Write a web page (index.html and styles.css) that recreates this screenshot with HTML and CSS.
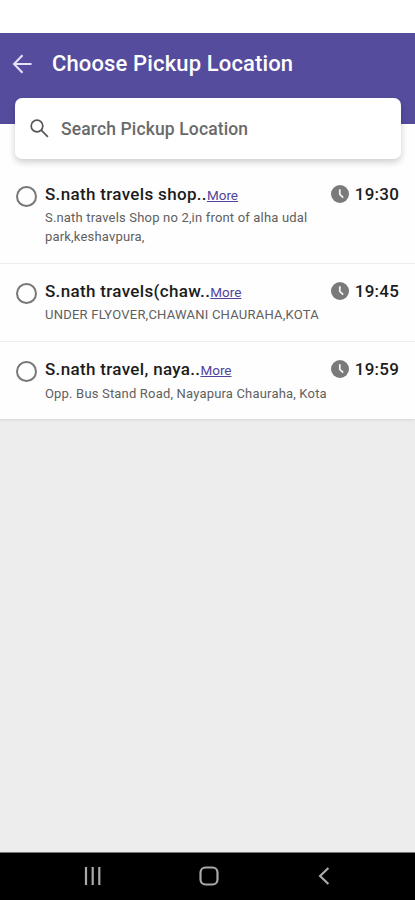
FILE: index.html
```html
<!DOCTYPE html>
<html lang="en">
<head>
<meta charset="utf-8">
<meta name="viewport" content="width=device-width, initial-scale=1">
<title>Choose Pickup Location</title>
<link rel="stylesheet" href="styles.css">
</head>
<body>
<div class="screen">
  <div class="status"></div>
  <header class="header">
    <svg class="back" viewBox="0 0 20 20"><path d="M19 10H1.5M10 1.2L1.5 10l8.5 8.8"/></svg>
    <h1 class="title">Choose Pickup Location</h1>
  </header>
  <main class="content">
    <div class="search">
      <svg class="search-icon" viewBox="0 0 19 19"><circle cx="7" cy="7" r="5.8"/><path d="M11.2 11.2L17.9 17.9"/></svg>
      <span class="placeholder">Search Pickup Location</span>
    </div>
    <ul class="list">
      <li class="row tall">
        <span class="radio"></span>
        <div class="info">
          <div class="line"><span class="name">S.nath travels shop..</span><a class="more">More</a></div>
          <p class="address">S.nath travels Shop no 2,in front of alha udal<br>park,keshavpura,</p>
        </div>
        <div class="time"><svg class="clock" viewBox="0 0 18 18"><circle cx="9" cy="9" r="9"/><path d="M8.8 4.3V9.4L12.2 12.6"/></svg><span>19:30</span></div>
      </li>
      <li class="row">
        <span class="radio"></span>
        <div class="info">
          <div class="line"><span class="name">S.nath travels(chaw..</span><a class="more">More</a></div>
          <p class="address caps">UNDER FLYOVER,CHAWANI CHAURAHA,KOTA</p>
        </div>
        <div class="time"><svg class="clock" viewBox="0 0 18 18"><circle cx="9" cy="9" r="9"/><path d="M8.8 4.3V9.4L12.2 12.6"/></svg><span>19:45</span></div>
      </li>
      <li class="row last">
        <span class="radio"></span>
        <div class="info">
          <div class="line"><span class="name">S.nath travel, naya..</span><a class="more">More</a></div>
          <p class="address">Opp. Bus Stand Road, Nayapura Chauraha, Kota</p>
        </div>
        <div class="time"><svg class="clock" viewBox="0 0 18 18"><circle cx="9" cy="9" r="9"/><path d="M8.8 4.3V9.4L12.2 12.6"/></svg><span>19:59</span></div>
      </li>
    </ul>
  </main>
  <nav class="navbar">
    <svg viewBox="0 0 20 20"><path d="M3 1v18M9.7 1v18M16.3 1v18"/></svg>
    <svg viewBox="0 0 20 20"><rect x="1.5" y="1.5" width="17" height="17" rx="5"/></svg>
    <svg viewBox="0 0 20 20"><path d="M14.4 2L6.1 10l8.3 8"/></svg>
  </nav>
</div>
</body>
</html>
```
FILE: styles.css
```css
* { box-sizing: border-box; }
body {
  margin: 0;
  background: #ededed;
  font-family: Roboto, "Liberation Sans", sans-serif;
}
.screen {
  display: flex;
  flex-direction: column;
  width: 415px;
  height: 900px;
  overflow: hidden;
}
.status { height: 33px; background: #fff; }
.header {
  display: flex;
  align-items: flex-start;
  height: 91px;
  padding: 17px 12px 0;
  background: #554c9e;
}
.back {
  width: 21px;
  height: 20px;
  margin-top: 4px;
  fill: none;
  stroke: #e6e2fa;
  stroke-width: 2;
}
.title {
  margin: 0 0 0 19px;
  color: #fff;
  font-size: 22px;
  line-height: 28px;
  font-weight: 500;
  letter-spacing: 0.14px;
  white-space: nowrap;
}
.content { flex: 1; }
.search {
  position: relative;
  display: flex;
  align-items: center;
  width: 386px;
  height: 61px;
  margin: -26px 0 0 15px;
  padding-left: 15px;
  border-radius: 7px;
  background: #fff;
  box-shadow: 0 3px 7px rgba(0, 0, 0, 0.2);
}
.search-icon {
  width: 19px;
  height: 19px;
  fill: none;
  stroke: #555;
  stroke-width: 1.7;
}
.placeholder {
  margin-left: 12px;
  color: #6a6a6a;
  font-size: 17.5px;
  font-weight: 500;
  letter-spacing: 0.13px;
}
.list {
  margin: -35px 0 0;
  padding: 35px 0 0;
  list-style: none;
  background: #fefefe;
  box-shadow: 0 1px 3px rgba(0, 0, 0, 0.1);
}
.row {
  display: flex;
  align-items: flex-start;
  height: 78px;
  padding: 15px 16px 0;
  border-bottom: 1px solid #eee;
}
.row.tall { height: 105px; padding-top: 23px; }
.row.last { height: 77px; border-bottom: 0; }
.radio {
  width: 21px;
  height: 21px;
  margin-top: 4px;
  border: 2px solid #777;
  border-radius: 50%;
}
.info { flex: 1; margin-left: 8px; white-space: nowrap; }
.line { height: 24px; line-height: 24px; }
.name { color: #1c1c1c; font-size: 17px; font-weight: 500; letter-spacing: 0.33px; }
.more { color: #51449c; font-size: 13.5px; text-decoration: underline; }
.address {
  margin: 2px 0 0;
  color: #606060;
  font-size: 13px;
  line-height: 19px;
  letter-spacing: 0.18px;
}
.address.caps { letter-spacing: 0.23px; }
.last .address { margin-top: 3px; }
.time {
  display: flex;
  align-items: center;
  gap: 6px;
  height: 24px;
  color: #1c1c1c;
  font-size: 17px;
  font-weight: 500;
  letter-spacing: 0.2px;
}
.clock { width: 18px; height: 18px; fill: #7a7a7a; }
.clock path { fill: none; stroke: #f2f2f2; stroke-width: 1.8; }
.navbar {
  display: flex;
  align-items: center;
  justify-content: space-between;
  height: 48px;
  padding: 0 81px 2px 83px;
  border-top: 1px solid #777;
  background: #000;
}
.navbar svg {
  width: 20px;
  height: 20px;
  fill: none;
  stroke: #aaa;
  stroke-width: 2.2;
}
```
